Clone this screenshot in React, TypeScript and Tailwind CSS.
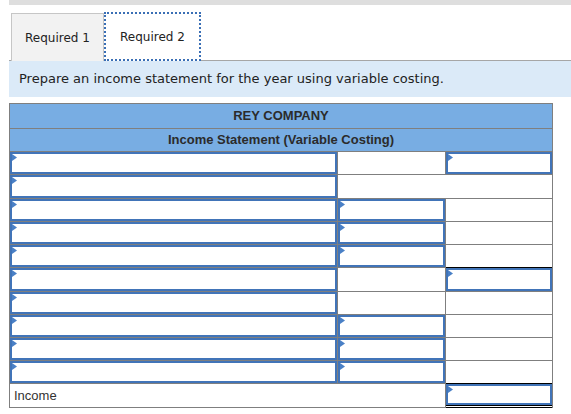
import React from 'react'

type Kind = 'in' | 'blank' | 'sum' | 'total' | 'blank2' | 'label2'

const rows: Kind[][] = [
  ['in', 'blank', 'in'],
  ['in', 'blank2'],
  ['in', 'in', 'blank'],
  ['in', 'in', 'blank'],
  ['in', 'in', 'blank'],
  ['in', 'blank', 'sum'],
  ['in', 'blank', 'blank'],
  ['in', 'in', 'blank'],
  ['in', 'in', 'blank'],
  ['in', 'in', 'blank'],
  ['label2', 'total'],
]

function Marker() {
  return (
    <svg className="absolute left-0 top-0" width="5" height="7" viewBox="0 0 5 7">
      <path d="M0 0L5 3.5L0 7Z" fill="#4a80c6" />
    </svg>
  )
}

function InputBox() {
  return (
    <div className="relative h-full w-full bg-white border-2 border-[#4174b8]">
      <Marker />
    </div>
  )
}

function Cell({ kind }: { kind: Kind }) {
  if (kind === 'in') return <div className="bg-white"><InputBox /></div>
  if (kind === 'blank') return <div className="bg-white" />
  if (kind === 'blank2') return <div className="col-span-2 bg-white" />
  if (kind === 'label2')
    return (
      <div className="col-span-2 bg-white flex items-center pl-[4px] text-[13px] text-[#333]">
        Income
      </div>
    )
  if (kind === 'sum')
    return (
      <div className="-mt-px border-t border-black bg-white">
        <InputBox />
      </div>
    )
  return (
    <div className="-mt-px -mb-px border-t border-b-[3px] border-double border-black bg-white">
      <InputBox />
    </div>
  )
}

export default function App() {
  return (
    <div className="w-[571px] h-[414px] bg-white overflow-hidden font-['DejaVu_Sans',sans-serif]">
      {/* top strip */}
      <div className="ml-[9px] h-[5px] bg-[#dedede]" />

      {/* tabs */}
      <div className="ml-[9px] mt-[7px] flex items-end border-b border-[#a6a6a6] pl-[2px]">
        <div className="w-[93px] h-[48px] -mb-px flex items-center justify-center bg-[#f2f2f2] border border-[#c6c6c6] border-b-0 text-[12px] text-[#222]">
          Required 1
        </div>
        <div className="w-[97px] h-[49px] -mb-px flex items-center justify-center bg-white border-2 border-dotted border-[#3a6fb5] text-[12px] text-[#222]">
          Required 2
        </div>
      </div>

      {/* instruction */}
      <div className="ml-[9px] h-[36px] bg-[#dbeaf8] flex items-center pl-[10px] text-[13px] text-[#222]">
        Prepare an income statement for the year using variable costing.
      </div>

      {/* statement */}
      <div className="ml-[9px] mt-[6px] w-[544px] grid grid-cols-[327px_107px_106px] grid-rows-[24px_22px_22px_23px_22px_22px_22px_23px_22px_22px_22px_22px_23px] gap-px bg-[#7f7f7f] border border-[#7f7f7f] font-['Liberation_Sans',Arial,sans-serif]">
        <div className="col-span-3 bg-[#78ade3] flex items-center justify-center text-[13px] font-bold text-[#2b2b2b]">
          REY COMPANY
        </div>
        <div className="col-span-3 bg-[#78ade3] flex items-center justify-center text-[13px] font-bold text-[#2b2b2b]">
          Income Statement (Variable Costing)
        </div>
        {rows.map((r, i) => (
          <React.Fragment key={i}>
            {r.map((k, j) => (
              <Cell key={j} kind={k} />
            ))}
          </React.Fragment>
        ))}
      </div>
    </div>
  )
}
